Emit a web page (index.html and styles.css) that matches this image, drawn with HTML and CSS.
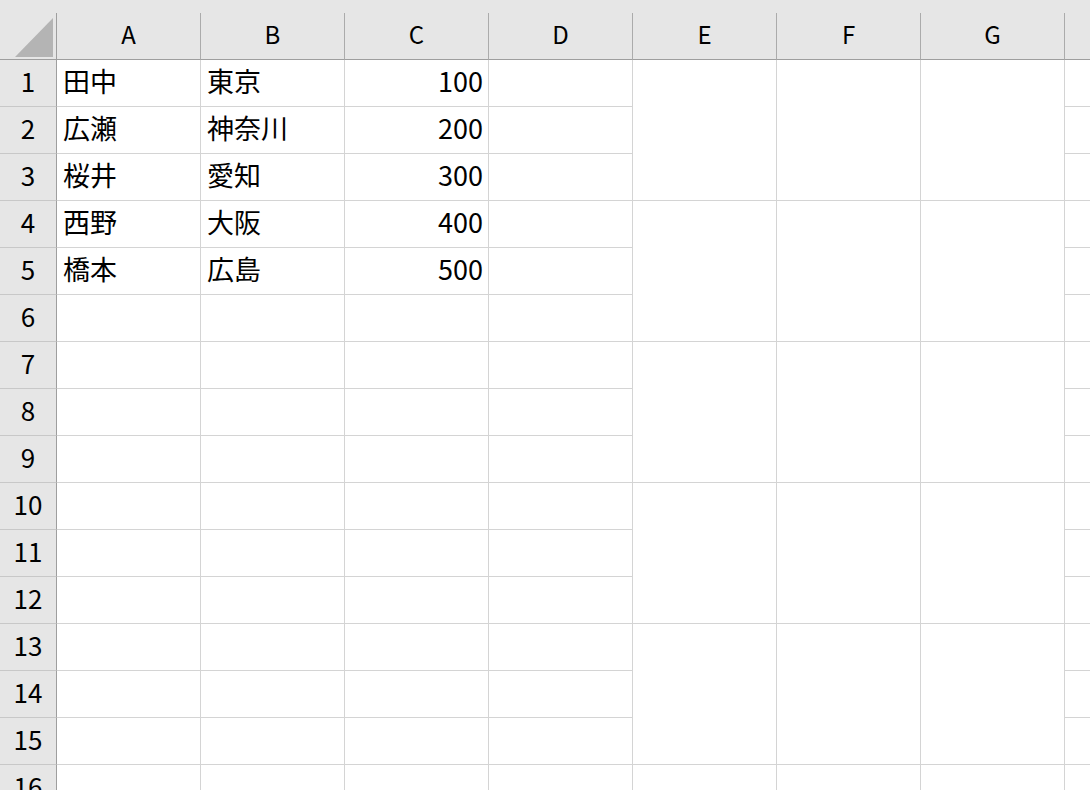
FILE: index.html
```html
<!DOCTYPE html>
<html lang="ja">
<head>
<meta charset="utf-8">
<title>Sheet</title>
<link rel="stylesheet" href="styles.css">
</head>
<body>
<div class="strip"></div>
<div class="sheet">
  <div class="corner"><div class="tri"></div></div>
  <div class="colhead">A</div>
  <div class="colhead">B</div>
  <div class="colhead">C</div>
  <div class="colhead">D</div>
  <div class="colhead">E</div>
  <div class="colhead">F</div>
  <div class="colhead">G</div>
  <div class="colhead last"></div>

  <div class="rowhead">1</div>
  <div class="cell">田中</div><div class="cell">東京</div><div class="cell num">100</div><div class="cell"></div>
  <div class="cell merge"></div><div class="cell merge"></div><div class="cell merge"></div>
  <div class="cell"></div>

  <div class="rowhead">2</div>
  <div class="cell">広瀬</div><div class="cell">神奈川</div><div class="cell num">200</div><div class="cell"></div>
  <div class="cell"></div>

  <div class="rowhead">3</div>
  <div class="cell">桜井</div><div class="cell">愛知</div><div class="cell num">300</div><div class="cell"></div>
  <div class="cell"></div>

  <div class="rowhead">4</div>
  <div class="cell">西野</div><div class="cell">大阪</div><div class="cell num">400</div><div class="cell"></div>
  <div class="cell merge"></div><div class="cell merge"></div><div class="cell merge"></div>
  <div class="cell"></div>

  <div class="rowhead">5</div>
  <div class="cell">橋本</div><div class="cell">広島</div><div class="cell num">500</div><div class="cell"></div>
  <div class="cell"></div>

  <div class="rowhead">6</div>
  <div class="cell"></div><div class="cell"></div><div class="cell"></div><div class="cell"></div>
  <div class="cell"></div>

  <div class="rowhead">7</div>
  <div class="cell"></div><div class="cell"></div><div class="cell"></div><div class="cell"></div>
  <div class="cell merge"></div><div class="cell merge"></div><div class="cell merge"></div>
  <div class="cell"></div>

  <div class="rowhead">8</div>
  <div class="cell"></div><div class="cell"></div><div class="cell"></div><div class="cell"></div>
  <div class="cell"></div>

  <div class="rowhead">9</div>
  <div class="cell"></div><div class="cell"></div><div class="cell"></div><div class="cell"></div>
  <div class="cell"></div>

  <div class="rowhead">10</div>
  <div class="cell"></div><div class="cell"></div><div class="cell"></div><div class="cell"></div>
  <div class="cell merge"></div><div class="cell merge"></div><div class="cell merge"></div>
  <div class="cell"></div>

  <div class="rowhead">11</div>
  <div class="cell"></div><div class="cell"></div><div class="cell"></div><div class="cell"></div>
  <div class="cell"></div>

  <div class="rowhead">12</div>
  <div class="cell"></div><div class="cell"></div><div class="cell"></div><div class="cell"></div>
  <div class="cell"></div>

  <div class="rowhead">13</div>
  <div class="cell"></div><div class="cell"></div><div class="cell"></div><div class="cell"></div>
  <div class="cell merge"></div><div class="cell merge"></div><div class="cell merge"></div>
  <div class="cell"></div>

  <div class="rowhead">14</div>
  <div class="cell"></div><div class="cell"></div><div class="cell"></div><div class="cell"></div>
  <div class="cell"></div>

  <div class="rowhead">15</div>
  <div class="cell"></div><div class="cell"></div><div class="cell"></div><div class="cell"></div>
  <div class="cell"></div>

  <div class="rowhead">16</div>
  <div class="cell"></div><div class="cell"></div><div class="cell"></div><div class="cell"></div>
  <div class="cell merge"></div><div class="cell merge"></div><div class="cell merge"></div>
  <div class="cell"></div>
</div>
</body>
</html>
```

FILE: styles.css
```css
html, body {
  margin: 0;
  padding: 0;
  background: #ffffff;
  overflow: hidden;
  width: 1090px;
  height: 790px;
}

body {
  font-family: "Noto Sans CJK JP", "Noto Sans", sans-serif;
  color: #000000;
}

.strip {
  height: 13px;
  background: #e6e6e6;
}

.sheet {
  display: grid;
  grid-template-columns: 57px repeat(7, 144px) 26px;
  grid-template-rows: 47px;
  grid-auto-rows: 47px;
}

.sheet > div {
  box-sizing: border-box;
}

.corner {
  background: #e6e6e6;
  border-right: 1px solid #9e9e9e;
  border-bottom: 1px solid #9e9e9e;
  display: flex;
  justify-content: flex-end;
  align-items: flex-end;
  padding: 0 3px 2px 0;
}

.tri {
  width: 38px;
  height: 39px;
  background: #b4b4b4;
  clip-path: polygon(100% 0, 100% 100%, 0 100%);
}

.colhead {
  background: #e6e6e6;
  border-right: 1px solid #ababab;
  border-bottom: 1px solid #9e9e9e;
  display: flex;
  align-items: center;
  justify-content: center;
  font-size: 24px;
  line-height: 1;
  padding-bottom: 4px;
}

.colhead.last {
  border-right: none;
}

.rowhead {
  background: #e6e6e6;
  border-right: 1px solid #9e9e9e;
  border-bottom: 1px solid #c8c8c8;
  display: flex;
  align-items: center;
  justify-content: center;
  font-size: 26px;
  line-height: 1;
  padding-bottom: 5px;
}

.cell {
  border-right: 1px solid #d4d4d4;
  border-bottom: 1px solid #d4d4d4;
  display: flex;
  align-items: center;
  padding: 0 5px 6px 6px;
  font-size: 27px;
  line-height: 1;
  white-space: nowrap;
  overflow: hidden;
}

.cell.num {
  justify-content: flex-end;
}

.cell.merge {
  grid-row: span 3;
}
```
